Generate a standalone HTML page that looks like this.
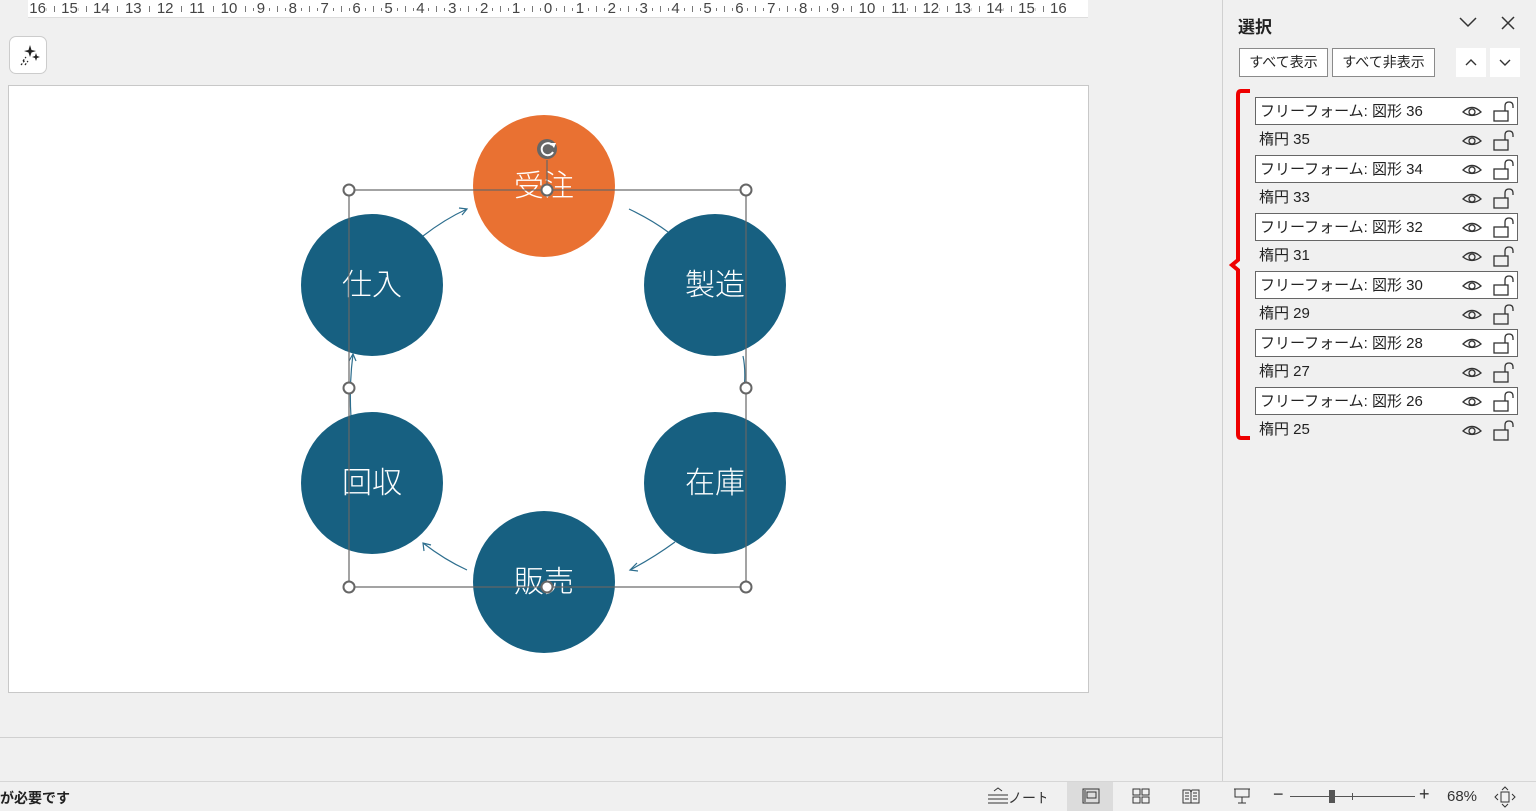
<!DOCTYPE html>
<html><head><meta charset="utf-8"><style>
*{margin:0;padding:0;box-sizing:border-box}
body{width:1536px;height:810px;overflow:hidden;background:#f0f0f0;font-family:"Liberation Sans","Noto Sans CJK JP",sans-serif;position:relative;color:#222}
.abs{position:absolute}
.ruler{left:28px;top:0;width:1060px;height:18px;background:#fff;border-bottom:1px solid #ddd}
.rn{position:absolute;top:0px;font-size:15px;color:#444;transform:translateX(-50%);background:#fff;padding:0 1px}
.slide{left:8px;top:85px;width:1081px;height:608px;background:#fff;border:1px solid #c8c8c8}
.pane{left:1222px;top:0;width:314px;height:781px;background:#f0f0f0;border-left:1px solid #d0d0d0}
.btn{position:absolute;top:48px;height:29px;border:1px solid #8a8a8a;background:#fff;font-size:14px;line-height:27px;text-align:center}
.row{position:absolute;left:1255px;width:263px;height:28px;font-size:15px;line-height:27px;padding-left:4px}
.row.b{border:1px solid #666;background:#fff}
.ic{position:absolute;left:1461px}
.status{left:0;top:781px;width:1536px;height:29px;background:#f0f0f0;border-top:1px solid #d6d6d6}
</style></head><body>
<div class="abs ruler" id="r"></div>
<script>
var r=document.getElementById('r'),h='';
for(var i=-16;i<=16;i++){var x=548+i*31.9-28;
for(var k=1;k<4;k++){if(i<16){var tx=x+k*8;h+='<span style="position:absolute;left:'+tx+'px;top:'+(k==2?6:8)+'px;width:1px;height:'+(k==2?6:3)+'px;background:#777"></span>';}}
h+='<span class="rn" style="left:'+x+'px">'+Math.abs(i)+'</span>';}
r.innerHTML=h;
</script>
<div class="abs" style="left:9px;top:36px;width:38px;height:38px;border:1px solid #ccc;border-radius:7px;background:#fff">
<svg width="38" height="38" viewBox="0 0 38 38"><path d="M20 8 L21.5 13 L26 14 L21.5 15.5 L20 20 L18.5 15.5 L14 14 L18.5 13Z" fill="#222"/><path d="M26 16 L27 19 L30 20 L27 21 L26 24 L25 21 L22 20 L25 19Z" fill="#222"/><path d="M13 24 L16 20 M11 28 L15 23 M15 28 L18 24" stroke="#222" stroke-width="1.2" stroke-dasharray="2 1.5"/></svg></div>
<div class="abs slide"></div>
<svg class="abs" style="left:0;top:0" width="1100" height="700">
<g fill="none" stroke="#2d6e8e" stroke-width="1.2">
<path d="M423 236 Q445 219 467 209"/><path d="M459 208 L467 209 L462 215"/>
<path d="M629 209 Q652 220 668 232"/>
<path d="M743 356 Q746 370 744 390"/>
<path d="M675 542 Q653 558 630 570"/><path d="M637 563 L630 570 L638 571"/>
<path d="M467 570 Q445 560 423 543"/><path d="M424 551 L423 543 L431 545"/>
<path d="M351 417 Q349 385 353 354"/><path d="M349 361 L353 354 L356 361"/>
</g>
<circle cx="544" cy="186" r="71" fill="#e97132"/>
<circle cx="372" cy="285" r="71" fill="#176081"/>
<circle cx="715" cy="285" r="71" fill="#176081"/>
<circle cx="372" cy="483" r="71" fill="#176081"/>
<circle cx="715" cy="483" r="71" fill="#176081"/>
<circle cx="544" cy="582" r="71" fill="#176081"/>
<g fill="#fff" font-size="30" text-anchor="middle" font-family="Noto Sans CJK JP,sans-serif" font-weight="300">
<text x="544" y="196">受注</text><text x="372" y="295">仕入</text><text x="715" y="295">製造</text>
<text x="372" y="493">回収</text><text x="715" y="493">在庫</text><text x="544" y="592">販売</text></g>
<g stroke="#666" stroke-width="1.2" fill="none"><rect x="349" y="190" width="397" height="397"/><line x1="547" y1="160" x2="547" y2="190"/></g>
<g fill="#fff" stroke="#666" stroke-width="2">
<circle cx="349" cy="190" r="5.5"/><circle cx="746" cy="190" r="5.5"/><circle cx="349" cy="388" r="5.5"/><circle cx="746" cy="388" r="5.5"/>
<circle cx="349" cy="587" r="5.5"/><circle cx="746" cy="587" r="5.5"/><circle cx="547" cy="190" r="5.5"/><circle cx="547" cy="587" r="5.5"/></g>
<circle cx="547" cy="149" r="10" fill="#666"/>
<path d="M552 145 A6 6 0 1 0 553 152" stroke="#fff" stroke-width="2" fill="none"/><path d="M550 143 L556 143 L554 148Z" fill="#fff"/>
</svg>
<div class="abs" style="left:0;top:737px;width:1222px;height:1px;background:#d0d0d0"></div>
<div class="abs pane">
<div style="position:absolute;left:15px;top:13px;font-size:17px;font-weight:bold">選択</div>
<svg style="position:absolute;left:236px;top:15px" width="18" height="14"><path d="M1 3 L9 11 L17 3" stroke="#333" stroke-width="1.5" fill="none"/></svg>
<svg style="position:absolute;left:277px;top:15px" width="16" height="16"><path d="M2 2 L14 14 M14 2 L2 14" stroke="#333" stroke-width="1.5"/></svg>
<div class="btn" style="left:16px;width:89px">すべて表示</div>
<div class="btn" style="left:109px;width:103px">すべて非表示</div>
<div style="position:absolute;left:233px;top:48px;width:30px;height:29px;background:#fff"><svg width="30" height="29"><path d="M10 17 L15 12 L20 17" stroke="#333" stroke-width="1.4" fill="none"/></svg></div>
<div style="position:absolute;left:267px;top:48px;width:30px;height:29px;background:#fff"><svg width="30" height="29"><path d="M10 12 L15 17 L20 12" stroke="#333" stroke-width="1.4" fill="none"/></svg></div>
</div>
<svg class="abs" style="left:1226px;top:88px" width="30" height="354"><path d="M24 3 L15 3 Q12 3 12 7 L12 172 L6 177 L12 182 L12 346 Q12 350 15 350 L24 350" stroke="#e00" stroke-width="4" fill="none"/></svg>
<div id="rows"></div>
<script>
var names=["フリーフォーム: 図形 36","楕円 35","フリーフォーム: 図形 34","楕円 33","フリーフォーム: 図形 32","楕円 31","フリーフォーム: 図形 30","楕円 29","フリーフォーム: 図形 28","楕円 27","フリーフォーム: 図形 26","楕円 25"];
var s='';
names.forEach(function(n,i){var y=97+i*29;var b=i%2==0;
s+='<div class="row'+(b?' b':'')+'" style="top:'+y+'px">'+n+'</div>';
s+='<svg class="ic" style="top:'+(y+4)+'px" width="60" height="22"><path d="M2 11 Q11 2 20 11 Q11 18 2 11Z" stroke="#333" stroke-width="1.3" fill="none"/><circle cx="11" cy="11" r="3" stroke="#333" stroke-width="1.3" fill="none"/><rect x="33" y="10" width="14" height="10" stroke="#333" stroke-width="1.3" fill="none"/><path d="M44 10 L44 5 Q44 1 48 1 Q52 1 52 5 L52 7" stroke="#333" stroke-width="1.3" fill="none"/></svg>';});
document.getElementById('rows').innerHTML=s;
</script>
<div class="abs status">
<div style="position:absolute;left:0;top:6px;font-size:14px;font-weight:bold">が必要です</div>
<svg style="position:absolute;left:986px;top:5px" width="60" height="20"><path d="M8 4 L12 1 L16 4" stroke="#333" fill="none"/><path d="M2 8 H22 M2 12 H22 M2 16 H22" stroke="#333"/><text x="22" y="16" font-size="14" fill="#333">ノート</text></svg>
<div style="position:absolute;left:1067px;top:0;width:46px;height:29px;background:#dcdcdc"></div>
<svg style="position:absolute;left:1082px;top:6px" width="18" height="16"><rect x="1" y="1" width="16" height="14" stroke="#333" fill="none"/><rect x="5" y="4" width="9" height="6" stroke="#333" fill="none"/><path d="M3 2 V14" stroke="#333"/></svg>
<svg style="position:absolute;left:1132px;top:6px" width="18" height="16"><rect x="1" y="1" width="7" height="6" stroke="#333" fill="none"/><rect x="10" y="1" width="7" height="6" stroke="#333" fill="none"/><rect x="1" y="9" width="7" height="6" stroke="#333" fill="none"/><rect x="10" y="9" width="7" height="6" stroke="#333" fill="none"/></svg>
<svg style="position:absolute;left:1182px;top:6px" width="18" height="16"><path d="M1 2 H8 L9 4 L10 2 H17 V15 H1Z M9 4 V15 M3 5 H7 M3 8 H7 M3 11 H7 M11 5 H15 M11 8 H15 M11 11 H15" stroke="#333" fill="none"/></svg>
<svg style="position:absolute;left:1233px;top:5px" width="18" height="18"><rect x="2" y="2" width="14" height="8" stroke="#333" fill="none"/><path d="M1 2 H17 M9 10 V16 M5 16 H13" stroke="#333"/></svg>
<div style="position:absolute;left:1273px;top:2px;font-size:18px;color:#333">−</div>
<div style="position:absolute;left:1290px;top:14px;width:125px;height:1px;background:#555"></div>
<div style="position:absolute;left:1329px;top:8px;width:6px;height:13px;background:#555"></div>
<div style="position:absolute;left:1352px;top:11px;width:1px;height:7px;background:#555"></div>
<div style="position:absolute;left:1419px;top:2px;font-size:18px;color:#333">+</div>
<div style="position:absolute;left:1447px;top:6px;font-size:15px;color:#333">68%</div>
<svg style="position:absolute;left:1494px;top:4px" width="22" height="22"><rect x="7" y="6" width="8" height="10" stroke="#333" fill="none"/><path d="M8 4 L11 1 L14 4 M8 18 L11 21 L14 18 M4 8 L1 11 L4 14 M18 8 L21 11 L18 14" stroke="#333" fill="none"/></svg>
</div>
</body></html>
